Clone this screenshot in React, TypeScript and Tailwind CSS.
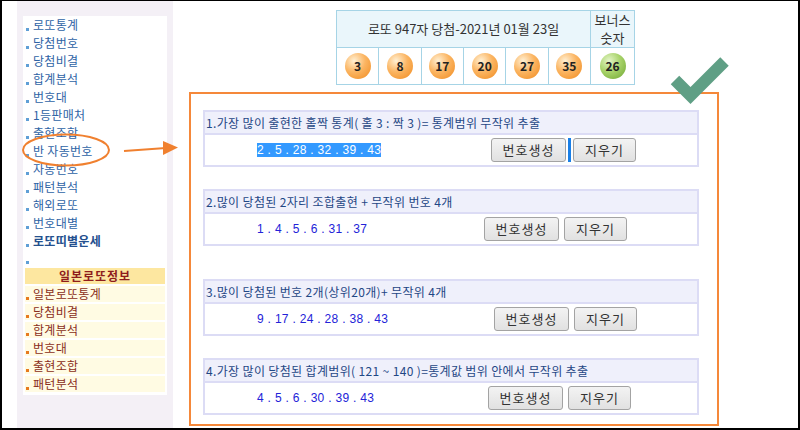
import React from 'react';

const menu = [
  '로또통계',
  '당첨번호',
  '당첨비결',
  '합계분석',
  '번호대',
  '1등판매처',
  '출현조합',
  '반 자동번호',
  '자동번호',
  '패턴분석',
  '해외로또',
  '번호대별',
];

const japanMenu = ['일본로또통계', '당첨비결', '합계분석', '번호대', '출현조합', '패턴분석'];

const balls = [3, 8, 17, 20, 27, 35];

const sections = [
  {
    title: '1.가장 많이 출현한 홀짝 통계( 홀 3 : 짝 3 )= 통계범위 무작위 추출',
    nums: '2 . 5 . 28 . 32 . 39 . 43',
    numW: 'w-[286px]',
    mt: 'mt-[16px]',
    selected: true,
  },
  {
    title: '2.많이 당첨된 2자리 조합출현 + 무작위 번호 4개',
    nums: '1 . 4 . 5 . 6 . 31 . 37',
    numW: 'w-[279px]',
    mt: 'mt-[22px]',
    selected: false,
  },
  {
    title: '3.많이 당첨된 번호 2개(상위20개)+ 무작위 4개',
    nums: '9 . 17 . 24 . 28 . 38 . 43',
    numW: 'w-[289px]',
    mt: 'mt-[33px]',
    selected: false,
  },
  {
    title: '4.가장 많이 당첨된 합계범위( 121 ~ 140 )=통계값 범위 안에서 무작위 추출',
    nums: '4 . 5 . 6 . 30 . 39 . 43',
    numW: 'w-[283px]',
    mt: 'mt-[22px]',
    selected: false,
  },
];

function Ball({ n, bonus }: { n: number; bonus?: boolean }) {
  return (
    <div
      className={
        bonus
          ? 'w-[26px] h-[26px] rounded-full mx-auto flex items-center justify-center text-[12px] font-bold text-[#222] bg-[radial-gradient(circle_at_35%_30%,#e4f5c8_0%,#a8d36a_45%,#6ea531_100%)]'
          : 'w-[26px] h-[26px] rounded-full mx-auto flex items-center justify-center text-[12px] font-bold text-[#222] bg-[radial-gradient(circle_at_35%_30%,#fff0d4_0%,#fbb562_45%,#f08a1e_100%)]'
      }
    >
      {n}
    </div>
  );
}

function Btn({ label, w }: { label: string; w: string }) {
  return (
    <div
      className={`${w} h-[24px] flex items-center justify-center rounded-[3px] border border-[#a3a3a3] bg-gradient-to-b from-[#f3f3f3] to-[#e1e1e1] text-[13px] tracking-[1px] text-[#333]`}
    >
      {label}
    </div>
  );
}

export default function App() {
  return (
    <div className="relative w-[800px] h-[430px] bg-white border-t border-l-2 border-r-2 border-b-2 border-black flex overflow-hidden font-['Noto_Sans_CJK_KR','Liberation_Sans',sans-serif]">
      {/* Sidebar */}
      <div className="ml-[15px] w-[156px] h-full bg-[#f4f0f6] px-[6px] pt-[15px]">
        <div className="bg-white h-[379px] flex flex-col">
          {menu.map((m) => (
            <div key={m} className="h-[18px] flex items-center text-[12px] leading-none tracking-[0.3px] text-[#2e63a5]">
              <span className="w-[3px] h-[3px] bg-[#5f9fd6] ml-[3px] mr-[4px] mt-[8px]" />
              {m}
            </div>
          ))}
          <div className="h-[18px] flex items-center text-[12px] leading-none tracking-[0.3px] font-bold text-[#24508e]">
            <span className="w-[3px] h-[3px] bg-[#5f9fd6] ml-[3px] mr-[4px] mt-[8px]" />
            로또띠별운세
          </div>
          <div className="h-[18px] flex items-end pb-[4px]">
            <span className="w-[3px] h-[3px] bg-[#5f9fd6] ml-[3px]" />
          </div>
          <div className="mx-[2px] h-[16px] bg-[#fde7a0] flex items-center justify-center text-[12px] font-bold leading-none text-[#8e1d1d] tracking-[1px]">
            일본로또정보
          </div>
          <div className="flex flex-col gap-[2px] mt-[2px] mx-[2px]">
            {japanMenu.map((m) => (
              <div key={m} className="h-[16px] bg-[#fffbe3] flex items-center text-[12px] leading-none tracking-[0.3px] text-[#8a2e20]">
                <span className="w-[3px] h-[3px] bg-[#e77a1e] ml-[1px] mr-[4px] mt-[8px]" />
                {m}
              </div>
            ))}
          </div>
        </div>
      </div>

      {/* Main */}
      <div className="flex flex-col">
        <table className="ml-[163px] mt-[9px] w-[299px] table-fixed border-collapse text-[13px] text-[#333]">
          <tbody>
            <tr className="h-[37px] bg-[#eaf6fb]">
              <td colSpan={6} className="border border-[#a6d4e6] text-center">
                로또 947자 당첨-2021년 01월 23일
              </td>
              <td className="w-[44px] border border-[#a6d4e6] p-0">
                <div className="flex flex-col items-center">
                  <span className="h-[18px] leading-[18px]">보너스</span>
                  <span className="h-[18px] leading-[18px]">숫자</span>
                </div>
              </td>
            </tr>
            <tr className="h-[37px] bg-white">
              {balls.map((b) => (
                <td key={b} className="border border-[#a6d4e6]">
                  <Ball n={b} />
                </td>
              ))}
              <td className="border border-[#a6d4e6]">
                <Ball n={26} bonus />
              </td>
            </tr>
          </tbody>
        </table>

        <div className="ml-[16px] mt-[7px] w-[530px] h-[334px] border-2 border-[#f5883a] pl-[12px] flex flex-col">
          {sections.map((s) => (
            <div key={s.title} className={`${s.mt} w-[496px] border-2 border-[#dcdcf5]`}>
              <div className="h-[21px] bg-[#eff0fb] flex items-center pl-[1px] text-[12px] leading-none tracking-[0.35px] text-[#1f4785] whitespace-nowrap">
                {s.title}
              </div>
              <div className="h-[32px] border-t-2 border-[#dcdcf5] flex items-center">
                <div className={`${s.numW} pl-[52px] flex items-center`}>
                  <span
                    className={
                      s.selected
                        ? "font-['Liberation_Sans',sans-serif] text-[12px] leading-[14px] tracking-[0.3px] bg-[#3399ff] text-white"
                        : "font-['Liberation_Sans',sans-serif] text-[12px] leading-[14px] tracking-[0.3px] text-[#2323d8]"
                    }
                  >
                    {s.nums}
                  </span>
                </div>
                <Btn label="번호생성" w="w-[75px]" />
                {s.selected ? (
                  <>
                    <span className="ml-[2px] w-[3px] h-[24px] bg-[#1a7fe6]" />
                    <span className="ml-[2px]" />
                  </>
                ) : (
                  <span className="ml-[5px]" />
                )}
                <Btn label="지우기" w="w-[63px]" />
              </div>
            </div>
          ))}
        </div>
      </div>

      {/* Annotations */}
      <svg className="absolute left-[-2px] top-[-1px] w-[800px] h-[430px] pointer-events-none" viewBox="0 0 800 430">
        <ellipse cx="66" cy="150" rx="43" ry="15.5" fill="none" stroke="#f0802f" strokeWidth="2" />
        <line x1="124" y1="151" x2="166" y2="148" stroke="#f0802f" strokeWidth="2" />
        <polygon points="163,141 178,147.5 163,155" fill="#f0802f" />
        <polyline
          points="675,80 690.5,95.5 724.5,61.5"
          fill="none"
          stroke="#5f9f85"
          strokeWidth="12"
          strokeLinecap="butt"
          strokeLinejoin="miter"
        />
      </svg>
    </div>
  );
}
